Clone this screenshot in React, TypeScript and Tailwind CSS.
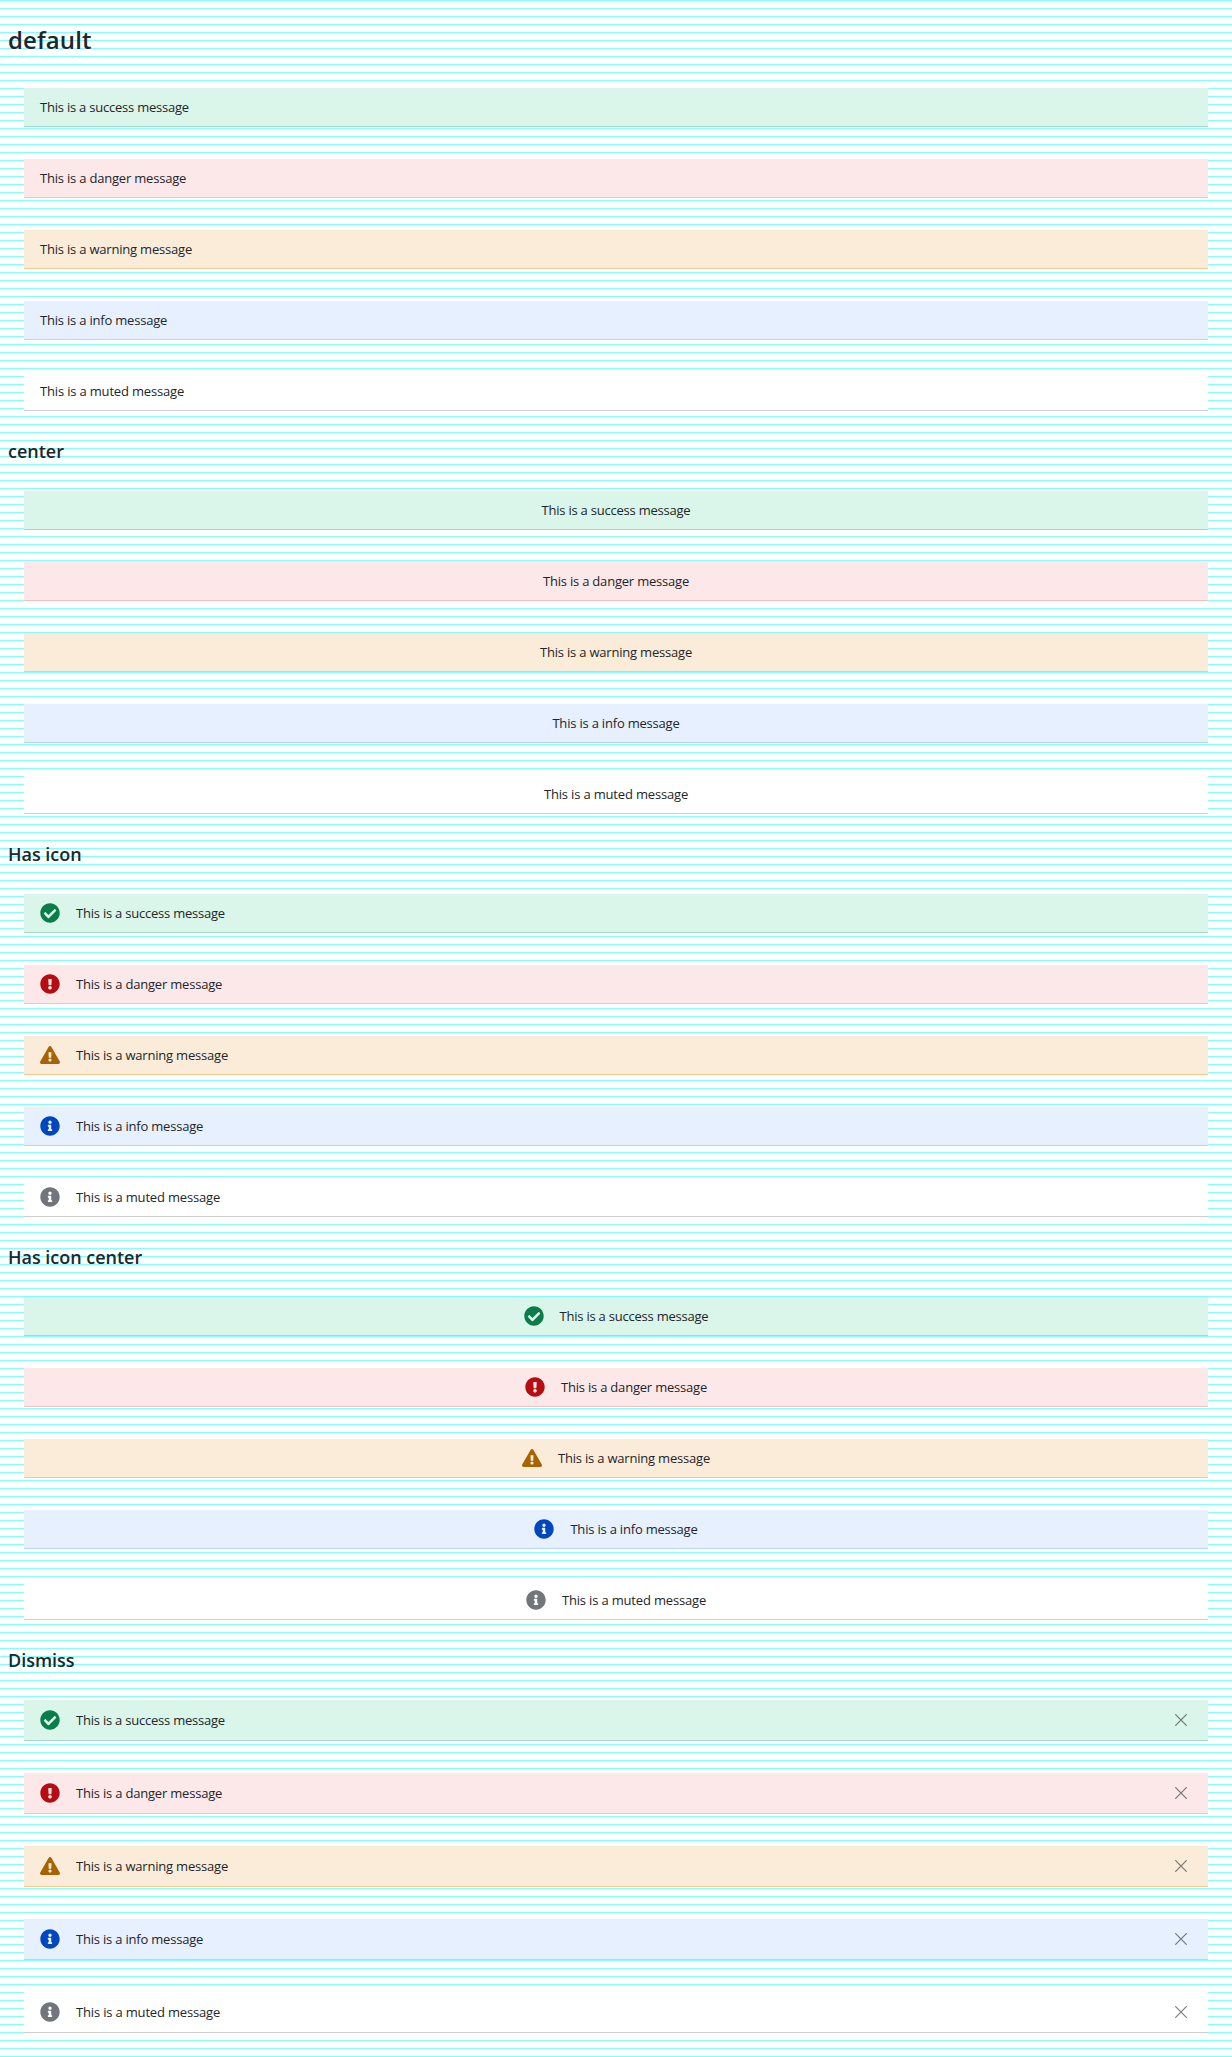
import React from "react";
import { FaCheckCircle, FaExclamationCircle, FaExclamationTriangle, FaInfoCircle } from "react-icons/fa";

const kinds = [
  { name: "success", icon: FaCheckCircle, bar: "bg-[#daf5e9] border-[#a5dbc4]", tint: "text-[#0a7d4b]", track: "tracking-[-0.22px]" },
  { name: "danger", icon: FaExclamationCircle, bar: "bg-[#fce8e9] border-[#f8bfc2]", tint: "text-[#b50d12]", track: "tracking-[-0.2px]" },
  { name: "warning", icon: FaExclamationTriangle, bar: "bg-[#fbecd9] border-[#f6c78a]", tint: "text-[#a66300]", track: "tracking-[-0.2px]" },
  { name: "info", icon: FaInfoCircle, bar: "bg-[#e6f0ff] border-[#bcd2f2]", tint: "text-[#0046be]", track: "tracking-[-0.2px]" },
  { name: "muted", icon: FaInfoCircle, bar: "bg-white border-[#cfcfd3]", tint: "text-[#727579]", track: "tracking-[-0.17px]" },
];

type SectionProps = { title: string; first?: boolean; center?: boolean; icon?: boolean; dismiss?: boolean };

function Section({ title, first, center, icon, dismiss }: SectionProps) {
  return (
    <section>
      {first ? (
        <h1 className="flex h-[88px] items-start px-2 pt-6 text-2xl leading-8 font-semibold tracking-[0.12px]">{title}</h1>
      ) : (
        <h2 className="flex h-[80px] items-start px-2 pt-7 text-lg leading-6 font-semibold tracking-[-0.02px]">{title}</h2>
      )}
      <div className="mx-6 flex flex-col gap-8">
        {kinds.map(({ name, icon: Icon, bar, tint, track }) => (
          <div
            key={name}
            className={`flex items-center border-b px-4 ${dismiss ? "h-[41px]" : "h-[39px]"} ${center ? "justify-center" : ""} ${bar}`}
          >
            {icon && <Icon size={20} className={`mr-4 shrink-0 ${tint}`} />}
            <span className={`text-[13px] leading-5 ${track}`}>{`This is a ${name} message`}</span>
            {dismiss && (
              <button aria-label="Dismiss" className="ml-auto flex h-6 w-[22px] items-center justify-center text-[#222529]/60">
                <svg width="12" height="12" viewBox="0 0 12 12" fill="none" stroke="currentColor" strokeWidth="1.2">
                  <path d="M0.3 0.3L11.7 11.7M11.7 0.3L0.3 11.7" />
                </svg>
              </button>
            )}
          </div>
        ))}
      </div>
    </section>
  );
}

export default function App() {
  return (
    <main className="min-h-screen bg-white bg-[repeating-linear-gradient(to_bottom,#7fffff_0px,#7fffff_1px,transparent_1px,transparent_8px)] pb-6 font-['Open_Sans',sans-serif] text-[#222529]">
      <Section title="default" first />
      <Section title="center" center />
      <Section title="Has icon" icon />
      <Section title="Has icon center" icon center />
      <Section title="Dismiss" icon dismiss />
    </main>
  );
}
